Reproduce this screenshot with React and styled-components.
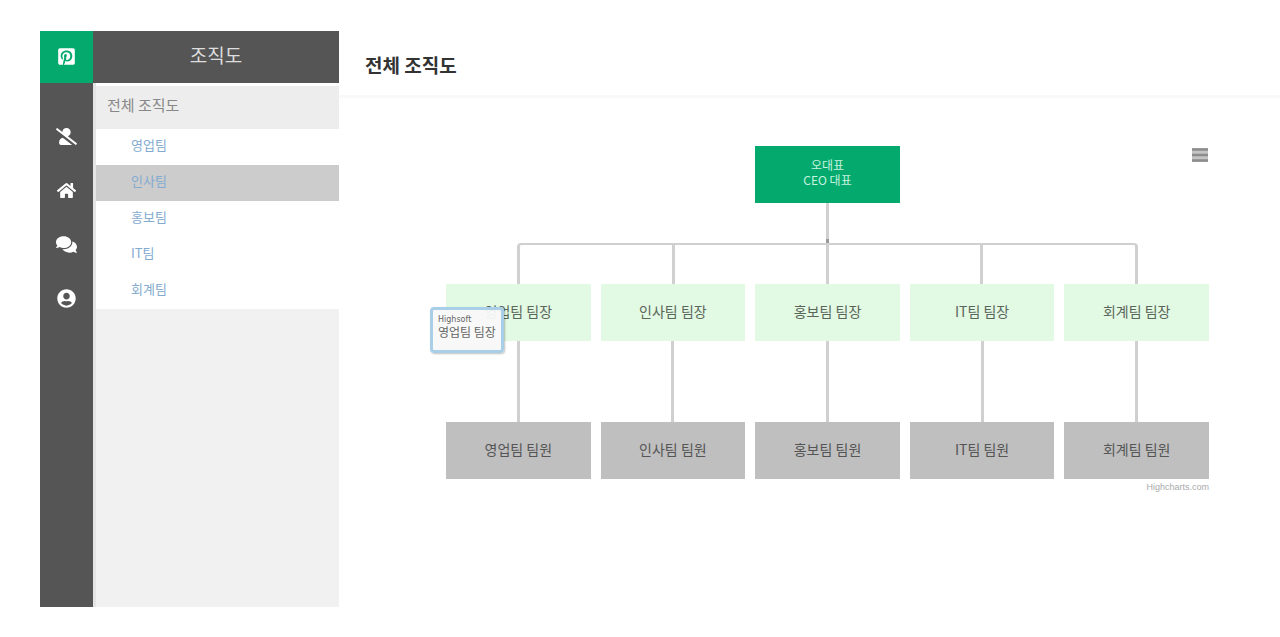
import React from "react";
import styled, { createGlobalStyle } from "styled-components";
import { FaPinterestSquare, FaUserSlash, FaHome, FaComments, FaUserCircle } from "react-icons/fa";

const GlobalStyle = createGlobalStyle`
  * { box-sizing: border-box; }
  body {
    margin: 0;
    background: #fff;
    color: #333;
    font-family: "Noto Sans CJK KR", "Liberation Sans", sans-serif;
  }
  ul { list-style: none; margin: 0; padding: 0; }
`;

const Shell = styled.div`
  display: flex;
  min-height: 100vh;
  padding: 31px 0 30px 40px;
`;

const Rail = styled.nav`
  flex: 0 0 53px;
  display: flex;
  flex-direction: column;
  background: #555;
`;

const RailLink = styled.a`
  display: flex;
  align-items: center;
  justify-content: center;
  height: ${(p) => (p.$brand ? 52 : 54)}px;
  margin-bottom: ${(p) => (p.$brand ? 27 : 0)}px;
  padding-bottom: 2px;
  background: ${(p) => (p.$brand ? "#04aa6d" : "transparent")};
  color: #fff;
  font-size: ${(p) => p.$size || 19}px;
`;

const Sidebar = styled.aside`
  flex: 0 0 246px;
  background: #f1f1f1;
  border-left: 3px solid #e4e4e4;
`;

const SidebarHeader = styled.h2`
  display: flex;
  align-items: center;
  justify-content: center;
  height: 52px;
  margin: 0 0 0 -3px;
  padding-bottom: 6px;
  background: #555;
  color: #ddd;
  font-size: 19px;
  font-weight: 400;
`;

const SidebarTitle = styled.h3`
  display: flex;
  align-items: center;
  height: 46px;
  margin: 0;
  padding: 0 11px 6px;
  border-top: 3px solid #fff;
  background: #ededed;
  color: #888;
  font-size: 15px;
  font-weight: 400;
`;

const TeamLink = styled.a`
  display: flex;
  align-items: center;
  height: 36px;
  padding: 0 35px 6px;
  background: ${(p) => (p.$active ? "#ccc" : "#fff")};
  color: #83abd0;
  font-size: 13px;
  text-decoration: none;
`;

const Main = styled.main`
  flex: 1;
  min-width: 0;
`;

const PageHeader = styled.header`
  display: flex;
  align-items: center;
  height: 67px;
  padding: 4px 26px 0;
  border-bottom: 3px solid #f9f9f9;
`;

const PageTitle = styled.h1`
  margin: 0;
  font-size: 19px;
  line-height: 28px;
  font-weight: 700;
`;

const Chart = styled.section`
  position: relative;
  padding: 48px 71px 0 107px;
`;

const MenuButton = styled.button`
  position: absolute;
  top: 50px;
  right: 72px;
  display: flex;
  padding: 0;
  border: 0;
  background: transparent;
`;

const Columns = styled.div`
  display: grid;
  grid-template-columns: repeat(5, 1fr);
  gap: 10px;
`;

const tones = {
  chief: { background: "#04aa6d", color: "#c4f2df" },
  leader: { background: "#e2f9e3", color: "#5b665b" },
  member: { background: "#bfbfbf", color: "#555" },
};

const Node = styled.div`
  display: flex;
  flex-direction: column;
  align-items: center;
  justify-content: center;
  grid-column: ${(p) => (p.$tone === "chief" ? 3 : "auto")};
  height: 57px;
  padding-bottom: ${(p) => (p.$tone === "chief" ? 6 : 3)}px;
  background: ${(p) => tones[p.$tone].background};
  color: ${(p) => tones[p.$tone].color};
  font-size: ${(p) => (p.$tone === "chief" ? 12 : 14)}px;
  line-height: 15px;
`;

const Stem = styled.div`
  width: 3px;
  height: ${(p) => p.$height}px;
  margin: ${(p) => (p.$inBus ? 0 : "0 auto")};
  background: #d0d0d0;
`;

const Trunk = styled(Stem)`
  border-bottom: 4px solid #999;
`;

const Bus = styled.div`
  display: flex;
  justify-content: space-evenly;
  height: 41px;
  margin: 0 calc(10% - 5px);
  border: solid #d0d0d0;
  border-width: 2px 3px 0;
  border-radius: 4px 4px 0 0;
`;

const Branch = styled.div`
  position: relative;
`;

const Tooltip = styled.div`
  position: absolute;
  top: 23px;
  left: -16px;
  width: 74px;
  height: 46px;
  padding: 5px;
  border: 3px solid #a9cfe8;
  border-radius: 4px;
  background: rgba(248, 248, 248, 0.95);
  box-shadow: 1px 1px 2px rgba(0, 0, 0, 0.25);
  color: #666;
  font-size: 12px;
  line-height: 14px;
  white-space: nowrap;
`;

const TooltipSeries = styled.div`
  font-family: "DejaVu Sans", sans-serif;
  font-size: 8px;
  line-height: 10px;
`;

const Credits = styled.a`
  display: block;
  color: #aaa;
  font-family: "Liberation Sans", sans-serif;
  font-size: 9px;
  line-height: 16px;
  text-align: right;
  text-decoration: none;
`;

const teams = ["영업팀", "인사팀", "홍보팀", "IT팀", "회계팀"];

export default function App() {
  return (
    <>
      <GlobalStyle />
      <Shell>
        <Rail>
          <RailLink href="#main" $brand aria-label="메인"><FaPinterestSquare /></RailLink>
          <RailLink href="#away" $size={21} aria-label="부재"><FaUserSlash /></RailLink>
          <RailLink href="#home" aria-label="홈"><FaHome /></RailLink>
          <RailLink href="#chat" $size={21} aria-label="대화"><FaComments /></RailLink>
          <RailLink href="#profile" aria-label="프로필"><FaUserCircle /></RailLink>
        </Rail>
        <Sidebar>
          <SidebarHeader>조직도</SidebarHeader>
          <SidebarTitle>전체 조직도</SidebarTitle>
          <ul>
            {teams.map((team) => (
              <li key={team}>
                <TeamLink href="#team" $active={team === "인사팀"}>{team}</TeamLink>
              </li>
            ))}
          </ul>
        </Sidebar>
        <Main>
          <PageHeader>
            <PageTitle>전체 조직도</PageTitle>
          </PageHeader>
          <Chart>
            <MenuButton aria-label="차트 메뉴">
              <svg width="16" height="14" viewBox="0 0 16 14">
                <rect width="16" height="14" fill="#c4c4c4" />
                <path d="M0 1.5h16M0 7h16M0 12.5h16" stroke="#8c8c8c" strokeWidth="2.6" />
              </svg>
            </MenuButton>
            <Columns>
              <Node $tone="chief">
                <span>오대표</span>
                <span>CEO 대표</span>
              </Node>
            </Columns>
            <Trunk $height={40} />
            <Bus>
              <Stem $inBus $height={39} />
              <Stem $inBus $height={39} />
              <Stem $inBus $height={39} />
            </Bus>
            <Columns>
              {teams.map((team, i) => (
                <Branch key={team}>
                  <Node $tone="leader">{team} 팀장</Node>
                  <Stem $height={81} />
                  <Node $tone="member">{team} 팀원</Node>
                  {i === 0 && (
                    <Tooltip role="tooltip">
                      <TooltipSeries>Highsoft</TooltipSeries>
                      {team} 팀장
                    </Tooltip>
                  )}
                </Branch>
              ))}
            </Columns>
            <Credits href="#credits">Highcharts.com</Credits>
          </Chart>
        </Main>
      </Shell>
    </>
  );
}
